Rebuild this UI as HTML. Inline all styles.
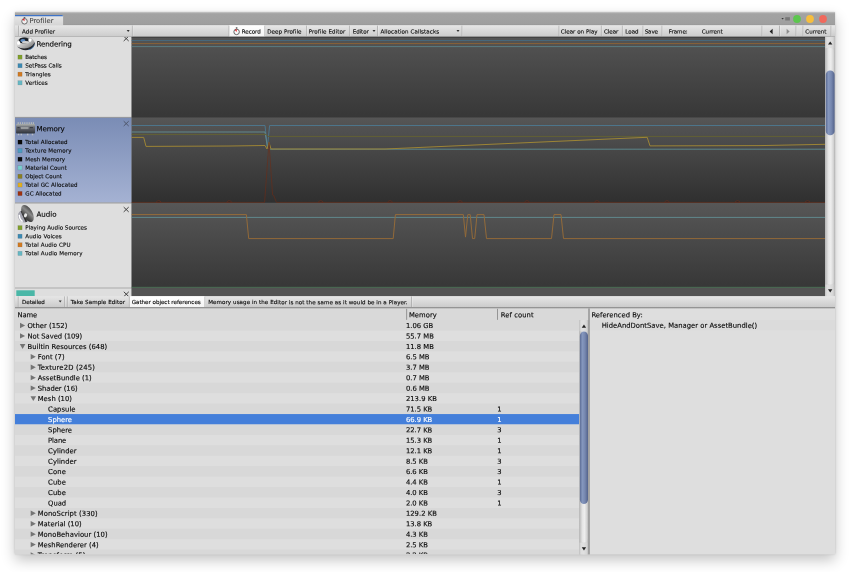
<!DOCTYPE html>
<html lang="en">
<head>
<meta charset="utf-8">
<title>Profiler</title>
<style>
html,body{margin:0;padding:0;background:#fff;}
body{width:850px;height:572px;position:relative;overflow:hidden;font-family:"DejaVu Sans", "Liberation Sans", sans-serif;}
.a{position:absolute;}
.t{position:absolute;left:0;top:0;transform-origin:0 0;white-space:nowrap;line-height:1.16;-webkit-font-smoothing:antialiased;-webkit-text-stroke:0.15px;font-family:"DejaVu Sans", "Liberation Sans", sans-serif;}
#win{left:15px;top:12px;width:820px;height:542px;background:#dedede;box-shadow:0 6px 13px rgba(0,0,0,.24),0 0 2px rgba(0,0,0,.18);}
#gfx{left:0;top:0;}
#txt{left:0;top:0;width:850px;height:554.3px;overflow:hidden;will-change:transform;}
</style>
</head>
<body>
<div class="a" id="win"></div>
<svg class="a" id="gfx" width="850" height="572" viewBox="0 0 850 572">
<defs>
<clipPath id="cp"><rect x="15" y="36.9" width="120" height="260"/></clipPath>
<clipPath id="cw"><rect x="15" y="12.2" width="820" height="542.1"/></clipPath>
<linearGradient id="gTitle" x1="0" y1="0" x2="0" y2="1"><stop offset="0" stop-color="#b9b9b9"/><stop offset="0.13" stop-color="#a3a3a3"/><stop offset="0.9" stop-color="#9f9f9f"/><stop offset="1" stop-color="#939393"/></linearGradient>
<linearGradient id="gTab" x1="0" y1="0" x2="0" y2="1"><stop offset="0" stop-color="#e9e9e9"/><stop offset="1" stop-color="#d4d4d4"/></linearGradient>
<linearGradient id="gTb1" x1="0" y1="0" x2="0" y2="1"><stop offset="0" stop-color="#e6e6e6"/><stop offset="1" stop-color="#cbcbcb"/></linearGradient>
<linearGradient id="gTb2" x1="0" y1="0" x2="0" y2="1"><stop offset="0" stop-color="#e6e6e6"/><stop offset="1" stop-color="#cbcbcb"/></linearGradient>
<linearGradient id="gOn" x1="0" y1="0" x2="0" y2="1"><stop offset="0" stop-color="#ffffff"/><stop offset="1" stop-color="#f4f4f4"/></linearGradient>
<linearGradient id="gOn2" x1="0" y1="0" x2="0" y2="1"><stop offset="0" stop-color="#ffffff"/><stop offset="1" stop-color="#f4f4f4"/></linearGradient>
<linearGradient id="gMem" x1="0" y1="0" x2="0" y2="1"><stop offset="0" stop-color="#7a8cb5"/><stop offset="1" stop-color="#a5b2d3"/></linearGradient>
<linearGradient id="gCh1" x1="0" y1="0" x2="0" y2="1"><stop offset="0" stop-color="#545454"/><stop offset="1" stop-color="#373737"/></linearGradient>
<linearGradient id="gCh2" x1="0" y1="0" x2="0" y2="1"><stop offset="0" stop-color="#565656"/><stop offset="1" stop-color="#2f2f2f"/></linearGradient>
<linearGradient id="gCh3" x1="0" y1="0" x2="0" y2="1"><stop offset="0" stop-color="#575757"/><stop offset="1" stop-color="#373737"/></linearGradient>
<linearGradient id="gLine" x1="0" y1="0" x2="0" y2="1"><stop offset="0" stop-color="#a2a2a2"/><stop offset="0.5" stop-color="#8a8a8a"/><stop offset="1" stop-color="#a9a9a9"/></linearGradient>
<linearGradient id="gTrkA" x1="0" y1="0" x2="1" y2="0"><stop offset="0" stop-color="#b0b0b0"/><stop offset="0.2" stop-color="#d0d0d0"/><stop offset="0.5" stop-color="#dedede"/><stop offset="0.82" stop-color="#d4d4d4"/><stop offset="1" stop-color="#b0b0b0"/></linearGradient><linearGradient id="gBtnA" x1="0" y1="0" x2="1" y2="0"><stop offset="0" stop-color="#c4c4c4"/><stop offset="0.2" stop-color="#dedede"/><stop offset="0.5" stop-color="#e0e0e0"/><stop offset="0.8" stop-color="#d6d6d6"/><stop offset="1" stop-color="#bcbcbc"/></linearGradient><linearGradient id="gTrIA" x1="0" y1="0" x2="1" y2="0"><stop offset="0" stop-color="#c2c2c2"/><stop offset="0.3" stop-color="#e4e4e4"/><stop offset="0.6" stop-color="#eeeeee"/><stop offset="1" stop-color="#cecece"/></linearGradient><linearGradient id="gThmA" x1="0" y1="0" x2="1" y2="0"><stop offset="0" stop-color="#5c6c95"/><stop offset="0.3" stop-color="#8597be"/><stop offset="0.62" stop-color="#7788b0"/><stop offset="1" stop-color="#54638b"/></linearGradient><linearGradient id="gTrkB" x1="0" y1="0" x2="1" y2="0"><stop offset="0" stop-color="#b0b0b0"/><stop offset="0.2" stop-color="#d0d0d0"/><stop offset="0.5" stop-color="#dedede"/><stop offset="0.82" stop-color="#d4d4d4"/><stop offset="1" stop-color="#b0b0b0"/></linearGradient><linearGradient id="gBtnB" x1="0" y1="0" x2="1" y2="0"><stop offset="0" stop-color="#c4c4c4"/><stop offset="0.2" stop-color="#dedede"/><stop offset="0.5" stop-color="#e0e0e0"/><stop offset="0.8" stop-color="#d6d6d6"/><stop offset="1" stop-color="#bcbcbc"/></linearGradient><linearGradient id="gTrIB" x1="0" y1="0" x2="1" y2="0"><stop offset="0" stop-color="#c2c2c2"/><stop offset="0.3" stop-color="#e4e4e4"/><stop offset="0.6" stop-color="#eeeeee"/><stop offset="1" stop-color="#cecece"/></linearGradient><linearGradient id="gThmB" x1="0" y1="0" x2="1" y2="0"><stop offset="0" stop-color="#5c6c95"/><stop offset="0.3" stop-color="#8597be"/><stop offset="0.62" stop-color="#7788b0"/><stop offset="1" stop-color="#54638b"/></linearGradient>
<filter id="soft" x="-20%" y="-20%" width="140%" height="140%"><feGaussianBlur stdDeviation="0.45"/></filter>
<filter id="soft2" x="-20%" y="-20%" width="140%" height="140%"><feGaussianBlur stdDeviation="0.3"/></filter>
<linearGradient id="gTor" x1="0" y1="0.1" x2="0.9" y2="1"><stop offset="0" stop-color="#dcdcdc"/><stop offset="0.35" stop-color="#d4d4d4"/><stop offset="0.65" stop-color="#a6a6a6"/><stop offset="1" stop-color="#5a5a5a"/></linearGradient>
<linearGradient id="gChip" x1="0" y1="0" x2="0" y2="1"><stop offset="0" stop-color="#a9adab"/><stop offset="0.16" stop-color="#8e9294"/><stop offset="0.3" stop-color="#6a6e75"/><stop offset="0.7" stop-color="#4b4e57"/><stop offset="1" stop-color="#2d3038"/></linearGradient>
<linearGradient id="gSpk" x1="0.2" y1="0" x2="0.8" y2="1"><stop offset="0" stop-color="#3c3c3c"/><stop offset="0.4" stop-color="#8a8a8a"/><stop offset="0.75" stop-color="#4a4a4a"/><stop offset="1" stop-color="#262626"/></linearGradient>
</defs>
<rect x="15.00" y="12.20" width="820.00" height="542.10" fill="#dedede"/>
<rect x="15.00" y="12.20" width="820.00" height="13.10" fill="url(#gTitle)"/>
<path d="M15 25.5 V14.9 H61.6 Q63.1 14.9 63.1 16.4 V25.5 Z" fill="url(#gTab)"/>
<path d="M15 14.9 H61.6 Q63.1 14.9 63.1 16.2 H15 Z" fill="#3f74c8"/>
<circle cx="797" cy="19" r="3.9" fill="#5cc64e"/><circle cx="810" cy="19" r="3.9" fill="#f6be3e"/><circle cx="823" cy="19" r="3.9" fill="#f0695d"/>
<path d="M781.4 17.9 h2.4 l-1.2 1.6 z" fill="#3a3a3a"/><rect x="785.2" y="17.2" width="4.7" height="3.3" fill="#787878"/>
<rect x="15.00" y="25.30" width="820.00" height="11.60" fill="url(#gTb1)"/>
<rect x="15.00" y="36.30" width="820.00" height="0.60" fill="#a2a2a2"/>
<rect x="229.00" y="25.40" width="35.80" height="11.00" fill="url(#gOn)"/>
<rect x="18.00" y="25.60" width="0.80" height="10.70" fill="#ababab"/>
<rect x="18.80" y="25.60" width="0.70" height="10.70" fill="#ffffff" opacity="0.35"/>
<rect x="131.90" y="25.60" width="0.80" height="10.70" fill="#ababab"/>
<rect x="132.70" y="25.60" width="0.70" height="10.70" fill="#ffffff" opacity="0.35"/>
<rect x="228.60" y="25.60" width="0.80" height="10.70" fill="#ababab"/>
<rect x="229.40" y="25.60" width="0.70" height="10.70" fill="#ffffff" opacity="0.35"/>
<rect x="264.50" y="25.60" width="0.80" height="10.70" fill="#ababab"/>
<rect x="265.30" y="25.60" width="0.70" height="10.70" fill="#ffffff" opacity="0.35"/>
<rect x="306.00" y="25.60" width="0.80" height="10.70" fill="#ababab"/>
<rect x="306.80" y="25.60" width="0.70" height="10.70" fill="#ffffff" opacity="0.35"/>
<rect x="349.30" y="25.60" width="0.80" height="10.70" fill="#ababab"/>
<rect x="350.10" y="25.60" width="0.70" height="10.70" fill="#ffffff" opacity="0.35"/>
<rect x="377.20" y="25.60" width="0.80" height="10.70" fill="#ababab"/>
<rect x="378.00" y="25.60" width="0.70" height="10.70" fill="#ffffff" opacity="0.35"/>
<rect x="461.60" y="25.60" width="0.80" height="10.70" fill="#ababab"/>
<rect x="462.40" y="25.60" width="0.70" height="10.70" fill="#ffffff" opacity="0.35"/>
<rect x="558.60" y="25.60" width="0.80" height="10.70" fill="#ababab"/>
<rect x="559.40" y="25.60" width="0.70" height="10.70" fill="#ffffff" opacity="0.35"/>
<rect x="600.90" y="25.60" width="0.80" height="10.70" fill="#ababab"/>
<rect x="601.70" y="25.60" width="0.70" height="10.70" fill="#ffffff" opacity="0.35"/>
<rect x="621.90" y="25.60" width="0.80" height="10.70" fill="#ababab"/>
<rect x="622.70" y="25.60" width="0.70" height="10.70" fill="#ffffff" opacity="0.35"/>
<rect x="642.60" y="25.60" width="0.80" height="10.70" fill="#ababab"/>
<rect x="643.40" y="25.60" width="0.70" height="10.70" fill="#ffffff" opacity="0.35"/>
<rect x="661.60" y="25.60" width="0.80" height="10.70" fill="#ababab"/>
<rect x="662.40" y="25.60" width="0.70" height="10.70" fill="#ffffff" opacity="0.35"/>
<rect x="761.60" y="25.60" width="0.80" height="10.70" fill="#ababab"/>
<rect x="762.40" y="25.60" width="0.70" height="10.70" fill="#ffffff" opacity="0.35"/>
<rect x="779.20" y="25.60" width="0.80" height="10.70" fill="#ababab"/>
<rect x="780.00" y="25.60" width="0.70" height="10.70" fill="#ffffff" opacity="0.35"/>
<rect x="795.60" y="25.60" width="0.80" height="10.70" fill="#ababab"/>
<rect x="796.40" y="25.60" width="0.70" height="10.70" fill="#ffffff" opacity="0.35"/>
<rect x="802.60" y="25.60" width="0.80" height="10.70" fill="#ababab"/>
<rect x="803.40" y="25.60" width="0.70" height="10.70" fill="#ffffff" opacity="0.35"/>
<rect x="830.60" y="25.60" width="0.80" height="10.70" fill="#ababab"/>
<rect x="831.40" y="25.60" width="0.70" height="10.70" fill="#ffffff" opacity="0.35"/>
<path d="M126.70 30.00 h3 l-1.5 2.1 z" fill="#333"/>
<path d="M372.50 30.00 h3 l-1.5 2.1 z" fill="#333"/>
<path d="M456.50 30.00 h3 l-1.5 2.1 z" fill="#333"/>
<path d="M772.6 28.8 L769.6 31.5 L772.6 34.2 Z" fill="#222"/>
<path d="M786.6 28.8 L789.6 31.5 L786.6 34.2 Z" fill="#8c8c8c"/>
<rect x="15.00" y="36.90" width="116.70" height="80.50" fill="#dedede"/>
<rect x="15.00" y="117.40" width="116.70" height="85.40" fill="url(#gMem)"/>
<rect x="15.00" y="202.80" width="116.70" height="84.80" fill="#dedede"/>
<rect x="15.00" y="287.60" width="116.70" height="8.60" fill="#dedede"/>
<rect x="15.00" y="116.90" width="116.70" height="0.80" fill="#8f8f8f"/>
<rect x="15.00" y="202.50" width="116.70" height="0.90" fill="#8f8f8f"/>
<rect x="15.00" y="287.50" width="116.70" height="1.00" fill="#a9a9a9"/>
<rect x="16.30" y="290.30" width="18.40" height="5.70" fill="#4ab7a7"/>
<rect x="17.90" y="55.00" width="4.20" height="4.20" fill="#80a02c" stroke="#000" stroke-opacity="0.18" stroke-width="0.5"/>
<rect x="17.90" y="63.57" width="4.20" height="4.20" fill="#3c8ab3" stroke="#000" stroke-opacity="0.18" stroke-width="0.5"/>
<rect x="17.90" y="72.14" width="4.20" height="4.20" fill="#d07a22" stroke="#000" stroke-opacity="0.18" stroke-width="0.5"/>
<rect x="17.90" y="80.71" width="4.20" height="4.20" fill="#66b8c4" stroke="#000" stroke-opacity="0.18" stroke-width="0.5"/>
<rect x="17.90" y="140.00" width="4.20" height="4.20" fill="#0a0a0a" stroke="#000" stroke-opacity="0.18" stroke-width="0.5"/>
<rect x="17.90" y="148.57" width="4.20" height="4.20" fill="#4d9dc1" stroke="#000" stroke-opacity="0.18" stroke-width="0.5"/>
<rect x="17.90" y="157.14" width="4.20" height="4.20" fill="#0a0a0a" stroke="#000" stroke-opacity="0.18" stroke-width="0.5"/>
<rect x="17.90" y="165.71" width="4.20" height="4.20" fill="#79cfcf" stroke="#000" stroke-opacity="0.18" stroke-width="0.5"/>
<rect x="17.90" y="174.28" width="4.20" height="4.20" fill="#8b7f22" stroke="#000" stroke-opacity="0.18" stroke-width="0.5"/>
<rect x="17.90" y="182.85" width="4.20" height="4.20" fill="#e0ae22" stroke="#000" stroke-opacity="0.18" stroke-width="0.5"/>
<rect x="17.90" y="191.42" width="4.20" height="4.20" fill="#9f3210" stroke="#000" stroke-opacity="0.18" stroke-width="0.5"/>
<rect x="17.90" y="225.60" width="4.20" height="4.20" fill="#80a02c" stroke="#000" stroke-opacity="0.18" stroke-width="0.5"/>
<rect x="17.90" y="234.17" width="4.20" height="4.20" fill="#3c8ab3" stroke="#000" stroke-opacity="0.18" stroke-width="0.5"/>
<rect x="17.90" y="242.74" width="4.20" height="4.20" fill="#d07a22" stroke="#000" stroke-opacity="0.18" stroke-width="0.5"/>
<rect x="17.90" y="251.31" width="4.20" height="4.20" fill="#66b8c4" stroke="#000" stroke-opacity="0.18" stroke-width="0.5"/>
<path d="M123.70 36.20 l5 4.8 M128.70 36.20 l-5 4.8" stroke="#3a3a3a" stroke-width="0.95" fill="none" clip-path="url(#cp)"/>
<path d="M123.70 121.20 l5 4.8 M128.70 121.20 l-5 4.8" stroke="#4d5468" stroke-width="0.95" fill="none" clip-path="url(#cp)"/>
<path d="M123.70 207.10 l5 4.8 M128.70 207.10 l-5 4.8" stroke="#3a3a3a" stroke-width="0.95" fill="none" clip-path="url(#cp)"/>
<path d="M123.80 291.80 l5 4.8 M128.80 291.80 l-5 4.8" stroke="#3a3a3a" stroke-width="0.95" fill="none" clip-path="url(#cp)"/>
<rect x="131.70" y="36.90" width="693.30" height="259.30" fill="#3a3a3a"/>
<rect x="131.70" y="36.90" width="693.30" height="80.60" fill="url(#gCh1)"/>
<rect x="131.70" y="117.50" width="693.30" height="85.30" fill="url(#gCh2)"/>
<rect x="131.70" y="202.80" width="693.30" height="84.60" fill="url(#gCh3)"/>
<rect x="131.70" y="287.40" width="693.30" height="8.80" fill="#535353"/>
<g fill="none" stroke-linejoin="round" stroke-linecap="butt" opacity="0.68">
<!-- rendering -->
<rect x="131.7" y="36.9" width="693.3" height="1.1" fill="#3a3a3a" stroke="none"/>
<path d="M131.7 40.5 H825" stroke="#45728d" stroke-width="1.0"/>
<path d="M131.7 43.6 H825" stroke="#a46b2d" stroke-width="1.0"/>
<path d="M131.7 46.6 H825" stroke="#5e9099" stroke-width="1.0"/>
<!-- memory -->
<path d="M131.7 125.5 H265 L267.4 147.5 L269.6 125.5 H825" stroke="#4b86a6" stroke-width="1.0"/>
<path d="M131.7 132 H265 L267.5 147.5 L269.5 149.2 H825" stroke="#68a4ac" stroke-width="1.0"/>
<path d="M131.7 134.4 H266 L268 136.4 H825" stroke="#6d6a28" stroke-width="1.0"/>
<path d="M131.7 137.4 H143.7 L146 146.4 L230 146 L265 145.5 L267 149 L269 142.4 L271 149 L385 149 L647.2 137.3 L650 145.9 L760 145.6 L825 144.3" stroke="#c4a02c" stroke-width="1.0"/>
<path d="M131.7 202.4 H264.6 L269 142.4 L272.6 195 L274 196 L276.4 202.4 H825" stroke="#702b15" stroke-width="1.0" stroke-opacity="0.85"/>
<g fill="#262626" stroke="#7c2e16" stroke-width="0.7"><path d="M156.1 202.3 q2.6 -3.2 5.2 0z"/><path d="M226.6 202.3 q2.6 -3.2 5.2 0z"/><path d="M318.2 202.3 q2.6 -3.2 5.2 0z"/><path d="M387.4 202.3 q2.6 -3.2 5.2 0z"/><path d="M457.4 202.3 q2.6 -3.2 5.2 0z"/><path d="M524.4 202.3 q2.6 -3.2 5.2 0z"/><path d="M594.4 202.3 q2.6 -3.2 5.2 0z"/><path d="M664.4 202.3 q2.6 -3.2 5.2 0z"/><path d="M734.9 202.3 q2.6 -3.2 5.2 0z"/><path d="M804.9 202.3 q2.6 -3.2 5.2 0z"/></g>
<!-- audio -->
<path d="M131.7 217.4 H825" stroke="#67a3a9" stroke-width="1.0"/>
<path d="M131.7 214.6 H246.4 L248.7 238.6 H393.2 L395.4 214.6 H463.3 L465.5 237.1 L467.8 214.6 H470.2 L472.5 238.6 H474.7 L477 214.6 H484 L486.5 238.6 H551.5 L554 214.6 H561 L563.5 238.6 H825" stroke="#b47830" stroke-width="1.0"/>
<path d="M131.7 287.3 H825" stroke="#4a8059" stroke-width="1"/>
</g>

<rect x="825.10" y="37.00" width="9.80" height="259.20" fill="url(#gTrkA)"/>
<rect x="825.10" y="37.00" width="9.80" height="11.20" fill="url(#gBtnA)"/>
<rect x="825.10" y="284.60" width="9.80" height="11.60" fill="url(#gBtnA)"/>
<rect x="826.00" y="48.00" width="8.00" height="236.40" rx="4" fill="url(#gTrIA)"/>
<rect x="825.80" y="70.40" width="8.80" height="64.90" rx="4.3" fill="url(#gThmA)"/>
<path d="M828.00 44.60 h4.4 l-2.2 -3.2 z" fill="#222"/>
<path d="M828.00 289.20 h4.4 l-2.2 3.2 z" fill="#222"/>
<rect x="15.00" y="296.20" width="820.00" height="11.00" fill="url(#gTb2)"/>
<rect x="129.50" y="296.30" width="75.50" height="10.90" fill="url(#gOn2)"/>
<rect x="17.80" y="296.40" width="0.80" height="10.80" fill="#ababab"/>
<rect x="18.60" y="296.40" width="0.70" height="10.80" fill="#ffffff" opacity="0.35"/>
<rect x="64.00" y="296.40" width="0.80" height="10.80" fill="#ababab"/>
<rect x="64.80" y="296.40" width="0.70" height="10.80" fill="#ffffff" opacity="0.35"/>
<rect x="66.90" y="296.40" width="0.80" height="10.80" fill="#ababab"/>
<rect x="67.70" y="296.40" width="0.70" height="10.80" fill="#ffffff" opacity="0.35"/>
<rect x="128.90" y="296.40" width="0.80" height="10.80" fill="#ababab"/>
<rect x="129.70" y="296.40" width="0.70" height="10.80" fill="#ffffff" opacity="0.35"/>
<rect x="204.50" y="296.40" width="0.80" height="10.80" fill="#ababab"/>
<rect x="205.30" y="296.40" width="0.70" height="10.80" fill="#ffffff" opacity="0.35"/>
<rect x="411.20" y="296.40" width="0.80" height="10.80" fill="#ababab"/>
<rect x="412.00" y="296.40" width="0.70" height="10.80" fill="#ffffff" opacity="0.35"/>
<path d="M58.70 300.40 h3 l-1.5 2.1 z" fill="#333"/>
<rect x="15.0" y="307.00" width="820.0" height="1.7" fill="url(#gLine)"/>
<rect x="15.00" y="308.60" width="573.30" height="245.70" fill="#d9d9d9"/>
<rect x="15.00" y="320.15" width="564.20" height="10.46" fill="#d8d8d8"/>
<path d="M20.00 322.77 L25.10 325.47 L20.00 328.17 Z" fill="#747474" clip-path="url(#cw)"/>
<rect x="15.00" y="330.58" width="564.20" height="10.46" fill="#dedede"/>
<path d="M20.00 333.20 L25.10 335.90 L20.00 338.60 Z" fill="#747474" clip-path="url(#cw)"/>
<rect x="15.00" y="341.02" width="564.20" height="10.46" fill="#d8d8d8"/>
<path d="M19.80 344.04 h5.6 l-2.8 4.9 Z" fill="#747474"/>
<rect x="15.00" y="351.45" width="564.20" height="10.46" fill="#dedede"/>
<path d="M30.70 354.07 L35.80 356.77 L30.70 359.47 Z" fill="#747474" clip-path="url(#cw)"/>
<rect x="15.00" y="361.89" width="564.20" height="10.46" fill="#d8d8d8"/>
<path d="M30.70 364.51 L35.80 367.21 L30.70 369.91 Z" fill="#747474" clip-path="url(#cw)"/>
<rect x="15.00" y="372.32" width="564.20" height="10.46" fill="#dedede"/>
<path d="M30.70 374.94 L35.80 377.64 L30.70 380.34 Z" fill="#747474" clip-path="url(#cw)"/>
<rect x="15.00" y="382.76" width="564.20" height="10.46" fill="#d8d8d8"/>
<path d="M30.70 385.38 L35.80 388.08 L30.70 390.78 Z" fill="#747474" clip-path="url(#cw)"/>
<rect x="15.00" y="393.19" width="564.20" height="10.46" fill="#dedede"/>
<path d="M30.50 396.21 h5.6 l-2.8 4.9 Z" fill="#747474"/>
<rect x="15.00" y="403.63" width="564.20" height="10.46" fill="#d8d8d8"/>
<rect x="15.00" y="414.06" width="564.20" height="10.46" fill="#447fda"/>
<rect x="15.00" y="424.50" width="564.20" height="10.46" fill="#d8d8d8"/>
<rect x="15.00" y="434.94" width="564.20" height="10.46" fill="#dedede"/>
<rect x="15.00" y="445.37" width="564.20" height="10.46" fill="#d8d8d8"/>
<rect x="15.00" y="455.80" width="564.20" height="10.46" fill="#dedede"/>
<rect x="15.00" y="466.24" width="564.20" height="10.46" fill="#d8d8d8"/>
<rect x="15.00" y="476.67" width="564.20" height="10.46" fill="#dedede"/>
<rect x="15.00" y="487.11" width="564.20" height="10.46" fill="#d8d8d8"/>
<rect x="15.00" y="497.54" width="564.20" height="10.46" fill="#dedede"/>
<rect x="15.00" y="507.98" width="564.20" height="10.46" fill="#d8d8d8"/>
<path d="M30.70 510.60 L35.80 513.30 L30.70 516.00 Z" fill="#747474" clip-path="url(#cw)"/>
<rect x="15.00" y="518.41" width="564.20" height="10.46" fill="#dedede"/>
<path d="M30.70 521.03 L35.80 523.73 L30.70 526.43 Z" fill="#747474" clip-path="url(#cw)"/>
<rect x="15.00" y="528.85" width="564.20" height="10.46" fill="#d8d8d8"/>
<path d="M30.70 531.47 L35.80 534.17 L30.70 536.87 Z" fill="#747474" clip-path="url(#cw)"/>
<rect x="15.00" y="539.28" width="564.20" height="10.46" fill="#dedede"/>
<path d="M30.70 541.90 L35.80 544.60 L30.70 547.30 Z" fill="#747474" clip-path="url(#cw)"/>
<rect x="15.00" y="549.72" width="564.20" height="4.58" fill="#d8d8d8"/>
<path d="M30.70 552.34 L35.80 555.04 L30.70 557.74 Z" fill="#747474" clip-path="url(#cw)"/>
<rect x="406.30" y="308.80" width="0.80" height="11.05" fill="#848484"/>
<rect x="497.10" y="308.80" width="0.80" height="11.05" fill="#848484"/>
<rect x="579.20" y="320.15" width="9.10" height="234.15" fill="url(#gTrkB)"/>
<rect x="579.20" y="320.15" width="9.10" height="11.20" fill="url(#gBtnB)"/>
<rect x="579.20" y="542.70" width="9.10" height="11.60" fill="url(#gBtnB)"/>
<rect x="580.10" y="331.15" width="7.30" height="211.35" rx="4" fill="url(#gTrIB)"/>
<rect x="579.90" y="331.40" width="8.10" height="172.50" rx="4.3" fill="url(#gThmB)"/>
<path d="M581.75 327.75 h4.4 l-2.2 -3.2 z" fill="#222"/>
<path d="M581.75 547.30 h4.4 l-2.2 3.2 z" fill="#222"/>
<rect x="589.70" y="308.60" width="245.30" height="245.70" fill="#dedede"/>
<rect x="589.70" y="320.15" width="245.30" height="10.44" fill="#dbdbdb"/>
<rect x="588.30" y="308.60" width="1.40" height="245.70" fill="#8e8e8e"/>
<!-- stopwatch (tab) -->
<g filter="url(#soft2)">
<circle cx="24.5" cy="21.3" r="2.75" fill="#f1f1f1" stroke="#555" stroke-width="0.85"/>
<path d="M24.5 21.3 L22.4 19.6 A2.7 2.7 0 0 1 24.5 18.6 Z" fill="#e2272b"/>
<rect x="23.7" y="17.1" width="1.6" height="1.2" fill="#555"/>
</g>
<!-- stopwatch (record) -->
<g filter="url(#soft2)">
<circle cx="236.6" cy="31.9" r="2.75" fill="#fbfbfb" stroke="#505050" stroke-width="0.85"/>
<path d="M236.6 31.9 L234.8 30.1 A2.6 2.6 0 0 1 236.9 29.3 Z" fill="#e2272b"/>
<rect x="235.8" y="27.3" width="1.6" height="1.3" fill="#505050"/>
</g>
<!-- torus -->
<g filter="url(#soft)">
<ellipse cx="25.5" cy="43.5" rx="9.3" ry="6.3" fill="url(#gTor)"/>
<path d="M17 41.5 Q19 37.6 25 37.3 Q30 37.2 33 39.6 Q29 38.4 24.5 38.5 Q19.5 38.8 17 41.5 Z" fill="#8c8c8c"/>
<path d="M16.9 46.6 Q24 52.6 31.5 48.8 Q34.9 46.6 34.8 42.0 Q33.2 46.0 28.5 47.8 Q22.5 49.6 16.9 46.6 Z" fill="#23262c"/>
<path d="M27.8 49.9 Q33 48.2 34.8 43.2 Q34.4 47.9 29.8 50.0 Z" fill="#4d7db4"/>
<ellipse cx="24" cy="40.5" rx="5.0" ry="2.9" fill="#1e242c"/>
<ellipse cx="22.9" cy="40.6" rx="2.5" ry="1.6" fill="#5f8ec4"/>
<ellipse cx="25.6" cy="42.3" rx="3.6" ry="1.2" fill="#d2d2d2"/>
<ellipse cx="18.6" cy="42.9" rx="1.6" ry="1.9" fill="#ffffff"/>
<ellipse cx="30.0" cy="40.0" rx="1.6" ry="1.7" transform="rotate(35 30 40)" fill="#ffffff"/>
</g>
<!-- memory chip -->
<g filter="url(#soft)">
<g fill="#b4b8ba"><rect x="17.6" y="122.2" width="1.2" height="2.2"/><rect x="19.8" y="122.2" width="1.2" height="2.2"/><rect x="22" y="122.2" width="1.2" height="2.2"/><rect x="24.2" y="122.2" width="1.2" height="2.2"/><rect x="26.4" y="122.2" width="1.2" height="2.2"/><rect x="28.6" y="122.2" width="1.2" height="2.2"/><rect x="30.8" y="122.2" width="1.2" height="2.2"/><rect x="32.8" y="122.2" width="1.2" height="2.2"/></g>
<rect x="16.1" y="124.1" width="18.9" height="9.5" rx="0.8" fill="url(#gChip)"/>
<rect x="20.9" y="126.9" width="7.6" height="2.2" fill="#a1a4a6" opacity="0.85"/>
<rect x="17.4" y="127.0" width="2.2" height="1.2" fill="#3a3d44"/><rect x="29.8" y="127.0" width="3.2" height="1.2" fill="#3a3d44"/>
<g fill="#b9bcc4"><rect x="17.8" y="133.8" width="1.4" height="1.5"/><rect x="20.6" y="133.8" width="1.4" height="1.5"/><rect x="27" y="133.8" width="1.4" height="1.5"/><rect x="31.8" y="133.8" width="1.4" height="1.5"/></g>
</g>
<!-- speaker -->
<g filter="url(#soft)">
<path d="M21.2 210.6 Q16.2 213.5 18.6 218.6 Q20.4 222.4 24.6 222.6 L28 221.8 L22.2 208.4 Z" fill="#a3a3ae"/>
<path d="M19.2 214.8 Q19.4 219.4 22.6 221.6" stroke="#ffffff" stroke-width="1.5" fill="none"/>
<path d="M21.4 211 L26.4 221.9" stroke="#2c2c2c" stroke-width="1.7" fill="none"/>
<ellipse cx="27.5" cy="213.5" rx="9.4" ry="4.9" transform="rotate(60 27.5 213.5)" fill="url(#gSpk)"/>
<ellipse cx="25.5" cy="215.4" rx="1.5" ry="2.1" transform="rotate(25 25.5 215.4)" fill="#e6e6e6"/>
</g>

</svg>
<div id="txt" class="a">
<span class="t" style="transform:translate(29.40px,18.10px) rotate(0.03deg);font-size:6.8px;color:#3a3a3a;letter-spacing:0.045px;-webkit-text-stroke:0.05px;">Profiler</span>
<span class="t" style="-webkit-text-stroke:0.13px;transform:translate(22.00px,28.59px) rotate(0.03deg);font-size:5.57px;color:#0a0a0a;letter-spacing:0.073px;">Add Profiler</span>
<span class="t" style="-webkit-text-stroke:0.13px;transform:translate(241.70px,28.59px) rotate(0.03deg);font-size:5.57px;color:#0a0a0a;letter-spacing:-0.037px;">Record</span>
<span class="t" style="-webkit-text-stroke:0.13px;transform:translate(267.30px,28.59px) rotate(0.03deg);font-size:5.57px;color:#0a0a0a;letter-spacing:0.039px;">Deep Profile</span>
<span class="t" style="-webkit-text-stroke:0.13px;transform:translate(308.70px,28.59px) rotate(0.03deg);font-size:5.57px;color:#0a0a0a;letter-spacing:0.083px;">Profile Editor</span>
<span class="t" style="-webkit-text-stroke:0.13px;transform:translate(352.70px,28.59px) rotate(0.03deg);font-size:5.57px;color:#0a0a0a;letter-spacing:-0.079px;">Editor</span>
<span class="t" style="-webkit-text-stroke:0.13px;transform:translate(380.50px,28.59px) rotate(0.03deg);font-size:5.57px;color:#0a0a0a;letter-spacing:0.069px;">Allocation Callstacks</span>
<span class="t" style="-webkit-text-stroke:0.13px;transform:translate(560.70px,28.59px) rotate(0.03deg);font-size:5.57px;color:#0a0a0a;letter-spacing:0.029px;">Clear on Play</span>
<span class="t" style="-webkit-text-stroke:0.13px;transform:translate(603.90px,28.59px) rotate(0.03deg);font-size:5.57px;color:#0a0a0a;letter-spacing:-0.033px;">Clear</span>
<span class="t" style="-webkit-text-stroke:0.13px;transform:translate(625.20px,28.59px) rotate(0.03deg);font-size:5.57px;color:#0a0a0a;letter-spacing:0.034px;">Load</span>
<span class="t" style="-webkit-text-stroke:0.13px;transform:translate(644.70px,28.59px) rotate(0.03deg);font-size:5.57px;color:#0a0a0a;letter-spacing:-0.120px;">Save</span>
<span class="t" style="-webkit-text-stroke:0.13px;transform:translate(668.70px,28.59px) rotate(0.03deg);font-size:5.57px;color:#0a0a0a;letter-spacing:-0.037px;">Frame:</span>
<span class="t" style="-webkit-text-stroke:0.13px;transform:translate(701.70px,28.59px) rotate(0.03deg);font-size:5.57px;color:#0a0a0a;letter-spacing:0.013px;">Current</span>
<span class="t" style="-webkit-text-stroke:0.13px;transform:translate(805.30px,28.59px) rotate(0.03deg);font-size:5.57px;color:#0a0a0a;letter-spacing:0.041px;">Current</span>
<span class="t" style="transform:translate(36.40px,40.52px) rotate(0.03deg);font-size:7.1px;color:#0a0a0a;letter-spacing:-0.093px;">Rendering</span>
<span class="t" style="transform:translate(36.40px,125.32px) rotate(0.03deg);font-size:7.1px;color:#0a0a0a;letter-spacing:-0.120px;">Memory</span>
<span class="t" style="transform:translate(36.40px,210.82px) rotate(0.03deg);font-size:7.1px;color:#0a0a0a;letter-spacing:0.025px;">Audio</span>
<span class="t" style="-webkit-text-stroke:0.13px;transform:translate(25.30px,53.99px) rotate(0.03deg);font-size:5.57px;color:#0a0a0a;letter-spacing:-0.120px;">Batches</span>
<span class="t" style="-webkit-text-stroke:0.13px;transform:translate(25.30px,62.56px) rotate(0.03deg);font-size:5.57px;color:#0a0a0a;letter-spacing:-0.008px;">SetPass Calls</span>
<span class="t" style="-webkit-text-stroke:0.13px;transform:translate(25.30px,71.13px) rotate(0.03deg);font-size:5.57px;color:#0a0a0a;letter-spacing:0.072px;">Triangles</span>
<span class="t" style="-webkit-text-stroke:0.13px;transform:translate(25.30px,79.70px) rotate(0.03deg);font-size:5.57px;color:#0a0a0a;letter-spacing:0.026px;">Vertices</span>
<span class="t" style="-webkit-text-stroke:0.13px;transform:translate(25.30px,138.99px) rotate(0.03deg);font-size:5.57px;color:#0a0a0a;letter-spacing:0.115px;">Total Allocated</span>
<span class="t" style="-webkit-text-stroke:0.13px;transform:translate(25.30px,147.56px) rotate(0.03deg);font-size:5.57px;color:#0a0a0a;letter-spacing:0.117px;">Texture Memory</span>
<span class="t" style="-webkit-text-stroke:0.13px;transform:translate(25.30px,156.13px) rotate(0.03deg);font-size:5.57px;color:#0a0a0a;letter-spacing:0.077px;">Mesh Memory</span>
<span class="t" style="-webkit-text-stroke:0.13px;transform:translate(25.30px,164.70px) rotate(0.03deg);font-size:5.57px;color:#0a0a0a;letter-spacing:0.036px;">Material Count</span>
<span class="t" style="-webkit-text-stroke:0.13px;transform:translate(25.30px,173.27px) rotate(0.03deg);font-size:5.57px;color:#0a0a0a;letter-spacing:0.024px;">Object Count</span>
<span class="t" style="-webkit-text-stroke:0.13px;transform:translate(25.30px,181.84px) rotate(0.03deg);font-size:5.57px;color:#0a0a0a;letter-spacing:0.098px;">Total GC Allocated</span>
<span class="t" style="-webkit-text-stroke:0.13px;transform:translate(25.30px,190.41px) rotate(0.03deg);font-size:5.57px;color:#0a0a0a;letter-spacing:0.043px;">GC Allocated</span>
<span class="t" style="-webkit-text-stroke:0.13px;transform:translate(25.30px,224.59px) rotate(0.03deg);font-size:5.57px;color:#0a0a0a;letter-spacing:0.002px;">Playing Audio Sources</span>
<span class="t" style="-webkit-text-stroke:0.13px;transform:translate(25.30px,233.16px) rotate(0.03deg);font-size:5.57px;color:#0a0a0a;letter-spacing:0.093px;">Audio Voices</span>
<span class="t" style="-webkit-text-stroke:0.13px;transform:translate(25.30px,241.73px) rotate(0.03deg);font-size:5.57px;color:#0a0a0a;letter-spacing:0.116px;">Total Audio CPU</span>
<span class="t" style="-webkit-text-stroke:0.13px;transform:translate(25.30px,250.30px) rotate(0.03deg);font-size:5.57px;color:#0a0a0a;letter-spacing:0.135px;">Total Audio Memory</span>
<span class="t" style="-webkit-text-stroke:0.13px;transform:translate(22.10px,299.09px) rotate(0.03deg);font-size:5.57px;color:#0a0a0a;letter-spacing:-0.081px;">Detailed</span>
<span class="t" style="-webkit-text-stroke:0.13px;transform:translate(70.70px,299.09px) rotate(0.03deg);font-size:5.57px;color:#0a0a0a;letter-spacing:0.062px;">Take Sample Editor</span>
<span class="t" style="-webkit-text-stroke:0.13px;transform:translate(131.70px,299.09px) rotate(0.03deg);font-size:5.57px;color:#0a0a0a;letter-spacing:-0.012px;">Gather object references</span>
<span class="t" style="-webkit-text-stroke:0.13px;transform:translate(208.20px,299.09px) rotate(0.03deg);font-size:5.57px;color:#0a0a0a;letter-spacing:0.064px;">Memory usage in the Editor is not the same as it would be in a Player.</span>
<span class="t" style="transform:translate(17.60px,312.20px) rotate(0.03deg);font-size:6.8px;color:#0a0a0a;letter-spacing:-0.120px;">Name</span>
<span class="t" style="transform:translate(408.90px,312.20px) rotate(0.03deg);font-size:6.8px;color:#0a0a0a;letter-spacing:0.057px;">Memory</span>
<span class="t" style="transform:translate(500.70px,312.20px) rotate(0.03deg);font-size:6.8px;color:#0a0a0a;letter-spacing:0.072px;">Ref count</span>
<span class="t" style="transform:translate(591.40px,312.20px) rotate(0.03deg);font-size:6.8px;color:#0a0a0a;letter-spacing:0.008px;">Referenced By:</span>
<span class="t" style="transform:translate(601.70px,322.80px) rotate(0.03deg);font-size:6.8px;color:#0a0a0a;letter-spacing:0.018px;">HideAndDontSave, Manager or AssetBundle()</span>
<span class="t" style="transform:translate(27.50px,323.02px) rotate(0.03deg);font-size:6.8px;color:#0a0a0a;letter-spacing:0.013px;">Other (152)</span>
<span class="t" style="transform:translate(405.90px,323.02px) rotate(0.03deg);font-size:6.8px;color:#0a0a0a;letter-spacing:0.023px;">1.06 GB</span>
<span class="t" style="transform:translate(27.50px,333.45px) rotate(0.03deg);font-size:6.8px;color:#0a0a0a;letter-spacing:-0.055px;">Not Saved (109)</span>
<span class="t" style="transform:translate(405.90px,333.45px) rotate(0.03deg);font-size:6.8px;color:#0a0a0a;letter-spacing:0.024px;">55.7 MB</span>
<span class="t" style="transform:translate(27.50px,343.89px) rotate(0.03deg);font-size:6.8px;color:#0a0a0a;letter-spacing:0.034px;">Builtin Resources (648)</span>
<span class="t" style="transform:translate(405.90px,343.89px) rotate(0.03deg);font-size:6.8px;color:#0a0a0a;letter-spacing:0.024px;">11.8 MB</span>
<span class="t" style="transform:translate(37.70px,354.32px) rotate(0.03deg);font-size:6.8px;color:#0a0a0a;letter-spacing:0.038px;">Font (7)</span>
<span class="t" style="transform:translate(405.90px,354.32px) rotate(0.03deg);font-size:6.8px;color:#0a0a0a;letter-spacing:0.016px;">6.5 MB</span>
<span class="t" style="transform:translate(37.70px,364.76px) rotate(0.03deg);font-size:6.8px;color:#0a0a0a;letter-spacing:0.160px;">Texture2D (245)</span>
<span class="t" style="transform:translate(405.90px,364.76px) rotate(0.03deg);font-size:6.8px;color:#0a0a0a;letter-spacing:0.016px;">3.7 MB</span>
<span class="t" style="transform:translate(37.70px,375.19px) rotate(0.03deg);font-size:6.8px;color:#0a0a0a;letter-spacing:-0.009px;">AssetBundle (1)</span>
<span class="t" style="transform:translate(405.90px,375.19px) rotate(0.03deg);font-size:6.8px;color:#0a0a0a;letter-spacing:0.016px;">0.7 MB</span>
<span class="t" style="transform:translate(37.70px,385.63px) rotate(0.03deg);font-size:6.8px;color:#0a0a0a;letter-spacing:-0.028px;">Shader (16)</span>
<span class="t" style="transform:translate(405.90px,385.63px) rotate(0.03deg);font-size:6.8px;color:#0a0a0a;letter-spacing:0.016px;">0.6 MB</span>
<span class="t" style="transform:translate(37.70px,396.06px) rotate(0.03deg);font-size:6.8px;color:#0a0a0a;letter-spacing:0.031px;">Mesh (10)</span>
<span class="t" style="transform:translate(405.90px,396.06px) rotate(0.03deg);font-size:6.8px;color:#0a0a0a;letter-spacing:0.031px;">213.9 KB</span>
<span class="t" style="transform:translate(48.10px,406.50px) rotate(0.03deg);font-size:6.8px;color:#0a0a0a;letter-spacing:0.049px;">Capsule</span>
<span class="t" style="transform:translate(405.90px,406.50px) rotate(0.03deg);font-size:6.8px;color:#0a0a0a;letter-spacing:-0.004px;">71.5 KB</span>
<span class="t" style="transform:translate(497.30px,406.50px) rotate(0.03deg);font-size:6.8px;color:#0a0a0a;letter-spacing:0.000px;">1</span>
<span class="t" style="transform:translate(48.10px,416.93px) rotate(0.03deg);font-size:6.8px;color:#fff;letter-spacing:-0.010px;">Sphere</span>
<span class="t" style="transform:translate(405.90px,416.93px) rotate(0.03deg);font-size:6.8px;color:#fff;letter-spacing:-0.004px;">66.9 KB</span>
<span class="t" style="transform:translate(497.30px,416.93px) rotate(0.03deg);font-size:6.8px;color:#fff;letter-spacing:0.000px;">1</span>
<span class="t" style="transform:translate(48.10px,427.37px) rotate(0.03deg);font-size:6.8px;color:#0a0a0a;letter-spacing:-0.010px;">Sphere</span>
<span class="t" style="transform:translate(405.90px,427.37px) rotate(0.03deg);font-size:6.8px;color:#0a0a0a;letter-spacing:-0.004px;">22.7 KB</span>
<span class="t" style="transform:translate(497.30px,427.37px) rotate(0.03deg);font-size:6.8px;color:#0a0a0a;letter-spacing:0.000px;">3</span>
<span class="t" style="transform:translate(48.10px,437.80px) rotate(0.03deg);font-size:6.8px;color:#0a0a0a;letter-spacing:-0.112px;">Plane</span>
<span class="t" style="transform:translate(405.90px,437.80px) rotate(0.03deg);font-size:6.8px;color:#0a0a0a;letter-spacing:-0.004px;">15.3 KB</span>
<span class="t" style="transform:translate(497.30px,437.80px) rotate(0.03deg);font-size:6.8px;color:#0a0a0a;letter-spacing:0.000px;">1</span>
<span class="t" style="transform:translate(48.10px,448.24px) rotate(0.03deg);font-size:6.8px;color:#0a0a0a;letter-spacing:0.055px;">Cylinder</span>
<span class="t" style="transform:translate(405.90px,448.24px) rotate(0.03deg);font-size:6.8px;color:#0a0a0a;letter-spacing:-0.004px;">12.1 KB</span>
<span class="t" style="transform:translate(497.30px,448.24px) rotate(0.03deg);font-size:6.8px;color:#0a0a0a;letter-spacing:0.000px;">1</span>
<span class="t" style="transform:translate(48.10px,458.67px) rotate(0.03deg);font-size:6.8px;color:#0a0a0a;letter-spacing:0.055px;">Cylinder</span>
<span class="t" style="transform:translate(405.90px,458.67px) rotate(0.03deg);font-size:6.8px;color:#0a0a0a;letter-spacing:-0.033px;">8.5 KB</span>
<span class="t" style="transform:translate(497.30px,458.67px) rotate(0.03deg);font-size:6.8px;color:#0a0a0a;letter-spacing:0.000px;">3</span>
<span class="t" style="transform:translate(48.10px,469.11px) rotate(0.03deg);font-size:6.8px;color:#0a0a0a;letter-spacing:0.122px;">Cone</span>
<span class="t" style="transform:translate(405.90px,469.11px) rotate(0.03deg);font-size:6.8px;color:#0a0a0a;letter-spacing:-0.033px;">6.6 KB</span>
<span class="t" style="transform:translate(497.30px,469.11px) rotate(0.03deg);font-size:6.8px;color:#0a0a0a;letter-spacing:0.000px;">3</span>
<span class="t" style="transform:translate(48.10px,479.54px) rotate(0.03deg);font-size:6.8px;color:#0a0a0a;letter-spacing:0.083px;">Cube</span>
<span class="t" style="transform:translate(405.90px,479.54px) rotate(0.03deg);font-size:6.8px;color:#0a0a0a;letter-spacing:-0.033px;">4.4 KB</span>
<span class="t" style="transform:translate(497.30px,479.54px) rotate(0.03deg);font-size:6.8px;color:#0a0a0a;letter-spacing:0.000px;">1</span>
<span class="t" style="transform:translate(48.10px,489.98px) rotate(0.03deg);font-size:6.8px;color:#0a0a0a;letter-spacing:0.083px;">Cube</span>
<span class="t" style="transform:translate(405.90px,489.98px) rotate(0.03deg);font-size:6.8px;color:#0a0a0a;letter-spacing:-0.033px;">4.0 KB</span>
<span class="t" style="transform:translate(497.30px,489.98px) rotate(0.03deg);font-size:6.8px;color:#0a0a0a;letter-spacing:0.000px;">3</span>
<span class="t" style="transform:translate(48.10px,500.41px) rotate(0.03deg);font-size:6.8px;color:#0a0a0a;letter-spacing:-0.061px;">Quad</span>
<span class="t" style="transform:translate(405.90px,500.41px) rotate(0.03deg);font-size:6.8px;color:#0a0a0a;letter-spacing:-0.033px;">2.0 KB</span>
<span class="t" style="transform:translate(497.30px,500.41px) rotate(0.03deg);font-size:6.8px;color:#0a0a0a;letter-spacing:0.000px;">1</span>
<span class="t" style="transform:translate(37.70px,510.85px) rotate(0.03deg);font-size:6.8px;color:#0a0a0a;letter-spacing:0.085px;">MonoScript (330)</span>
<span class="t" style="transform:translate(405.90px,510.85px) rotate(0.03deg);font-size:6.8px;color:#0a0a0a;letter-spacing:0.031px;">129.2 KB</span>
<span class="t" style="transform:translate(37.70px,521.28px) rotate(0.03deg);font-size:6.8px;color:#0a0a0a;letter-spacing:0.020px;">Material (10)</span>
<span class="t" style="transform:translate(405.90px,521.28px) rotate(0.03deg);font-size:6.8px;color:#0a0a0a;letter-spacing:-0.004px;">13.8 KB</span>
<span class="t" style="transform:translate(37.70px,531.72px) rotate(0.03deg);font-size:6.8px;color:#0a0a0a;letter-spacing:0.050px;">MonoBehaviour (10)</span>
<span class="t" style="transform:translate(405.90px,531.72px) rotate(0.03deg);font-size:6.8px;color:#0a0a0a;letter-spacing:-0.033px;">4.3 KB</span>
<span class="t" style="transform:translate(37.70px,542.15px) rotate(0.03deg);font-size:6.8px;color:#0a0a0a;letter-spacing:0.017px;">MeshRenderer (4)</span>
<span class="t" style="transform:translate(405.90px,542.15px) rotate(0.03deg);font-size:6.8px;color:#0a0a0a;letter-spacing:-0.033px;">2.5 KB</span>
<span class="t" style="transform:translate(37.70px,552.59px) rotate(0.03deg);font-size:6.8px;color:#0a0a0a;letter-spacing:0.184px;">Transform (5)</span>
<span class="t" style="transform:translate(405.90px,552.59px) rotate(0.03deg);font-size:6.8px;color:#0a0a0a;letter-spacing:-0.033px;">2.2 KB</span>
</div>
</body>
</html>
